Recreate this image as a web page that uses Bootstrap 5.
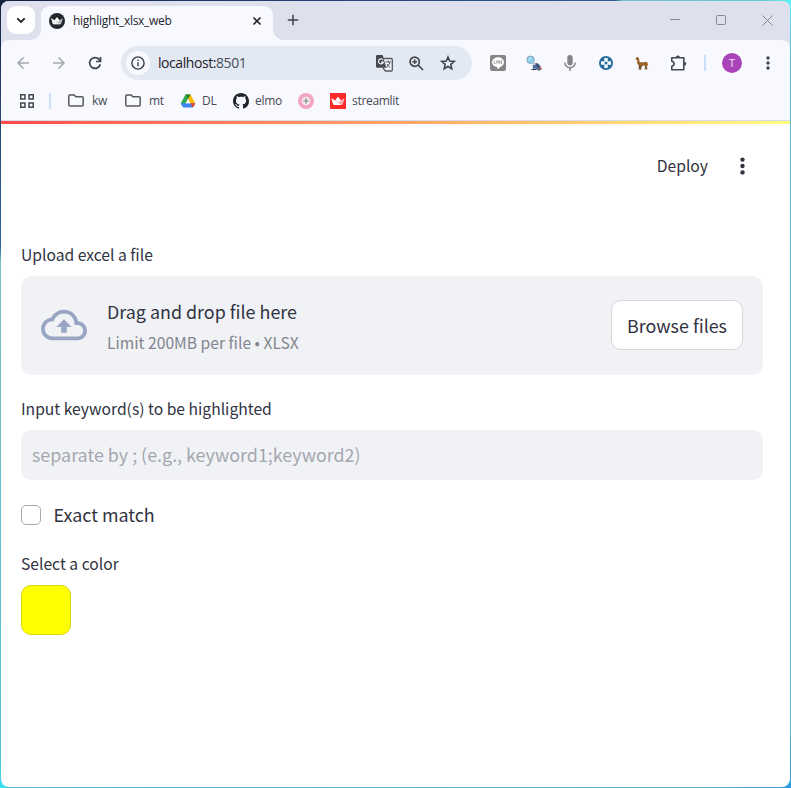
<!DOCTYPE html>
<html lang="en">
<head>
<meta charset="utf-8">
<meta name="viewport" content="width=device-width, initial-scale=1">
<title>highlight_xlsx_web</title>
<link href="https://cdn.jsdelivr.net/npm/bootstrap@5.3.0/dist/css/bootstrap.min.css" rel="stylesheet">
<style>
  html, body { height: 100%; }
  body {
    overflow: hidden; padding: 1px; color: #31333f;
    font-family: "Noto Sans CJK JP", "Noto Sans CJK SC", "Open Sans", sans-serif;
    background:
      linear-gradient(90deg, #14213f 0, #25406e 300px, #2f5c98 615px, #6cc3c9 622px, #66c9cf 760px, #5ff1f7 791px) top left / 100% 6px no-repeat,
      linear-gradient(#14213f 0, #2a4a78 120px, #2d6298 245px, #74c4c9 262px, #62c2cd 600px, #4fc3d3 760px, #3fe0f5 788px) top left / 6px 100% no-repeat,
      linear-gradient(#5ff1f7 0, #55bccb 60px, #4fb8cc 740px, #2a9be0 788px) top right / 6px 100% no-repeat,
      linear-gradient(90deg, #45bfd2, #4fb4c4 700px, #2f9fe0) bottom left / 100% 6px no-repeat;
  }
  svg { display: block; flex: none; }
  .chrome { font-family: "Open Sans", "Noto Sans", sans-serif; }
  .app-window { border-radius: 8px; overflow: hidden; background: #fff; }
  .tab-strip { height: 39px; background: #dee1ed; padding: 5px 0 0 6px; }
  .tab-search { width: 28px; height: 28px; border-radius: 9px; background: #fff; margin-right: 6px; }
  .page-tab { width: 232px; height: 34px; border-radius: 9px 9px 0 0; background: #f8f9fe; padding: 0 11px 5px 8px; }
  .page-tab::before, .page-tab::after { content: ""; position: absolute; bottom: 0; width: 10px; height: 10px; }
  .page-tab::before { left: -10px; background: radial-gradient(circle at 0 0, transparent 9.5px, #f8f9fe 10px); }
  .page-tab::after { right: -10px; background: radial-gradient(circle at 100% 0, transparent 9.5px, #f8f9fe 10px); }
  .tab-title { font-size: 12px; letter-spacing: -.28px; color: #22252b; margin-left: 8px; }
  .new-tab { width: 40px; height: 28px; }
  .win-controls { height: 28px; }
  .win-controls > span { width: 46px; }
  .tool-wrap { background: #dee1ed; }
  .tool-bar { height: 46px; background: #f8f9fe; border-radius: 8px 8px 0 0; padding-left: 4px; }
  .slot { width: 36px; }
  .slot-sm { width: 32px; }
  .slot-div { width: 18px; }
  .omnibox { width: 351px; height: 34px; border-radius: 17px; background: #e3e9f3; margin-left: 8px; margin-right: 8px; padding: 0 8px 0 5px; }
  .site-info { width: 24px; height: 24px; border-radius: 50%; background: #f8f9fe; }
  .address { font-size: 14px; letter-spacing: -.43px; color: #1f2227; margin-left: 8px; padding-bottom: 1px; }
  .address span { color: #4a4e56; }
  .v-bar { width: 2px; height: 16px; background: #cde0fa; }
  .avatar { width: 20px; height: 20px; border-radius: 50%; background: #a944b8; color: #f3dff6; font-size: 11.5px; line-height: 1; }
  .bookmark-bar { height: 34px; background: #f8f9fe; padding: 0 0 5px 19px; font-size: 12px; letter-spacing: -.3px; color: #464a52; }
  .bookmark-bar .v-bar { margin: 0 17px 0 15px; }
  .bookmark-bar .bm { gap: 8px; }
  .bm-a { width: 57px; } .bm-b { width: 55px; } .bm-c { width: 53px; } .bm-d { width: 65px; } .bm-e { width: 32px; }
  .bookmark-bar .bm-c, .bookmark-bar .bm-d, .bookmark-bar .bm-f { gap: 6px; }
  .hair { height: 1px; background: #d8dbe6; }
  .decor { height: 3px; background: linear-gradient(90deg, #ff4b4b, #fffd80); }
  .app-head { height: 84px; padding-right: 38px; }
  .deploy { font-size: 15.7px; line-height: 24px; margin-right: 25px; padding-bottom: 1px; }
  .app-main { padding: 35px 27px 0 20px; }
  .field-label { font-size: 15.67px; line-height: 24px; margin-bottom: 9px; display: block; }
  .dropzone { height: 99px; background: #f0f2f6; border-radius: 10px; padding: 0 20px 1px; margin-bottom: 22px; }
  .dz-text { margin-left: 20px; padding-top: 1px; }
  .dz-title { font-size: 17.9px; line-height: 30px; }
  .dz-note { font-size: 15.67px; line-height: 25px; color: #83858e; margin-top: 4px; }
  .browse { width: 132px; height: 50px; border: 1px solid #d6d6d9; border-radius: 10px; background: #fff; color: #31333f; font-size: 17.9px; padding: 0; }
  .keyword { height: 50px; background: #f0f2f6 !important; border: 0; border-radius: 10px; font-size: 17.9px; padding: 0 11px 2px; margin-bottom: 20px; }
  .keyword::placeholder { color: #a5a7ae; opacity: 1; }
  .check-row { height: 30px; margin-bottom: 22px; font-size: 17.9px; padding: 0; }
  .check-row .form-check-input { width: 20px; height: 20px; margin: 0 12.500px 0 0; border: 1px solid #a9aaaf; border-radius: 5px; float: none; }
  .check-row label { padding-bottom: 2px; }
  .swatch { width: 50px; height: 50px; border-radius: 10px; background: #ff0; border: 1px solid #d6d608; }
</style>
<script src="https://cdn.jsdelivr.net/npm/bootstrap@5.3.0/dist/js/bootstrap.bundle.min.js"></script>
</head>
<body>
<div class="app-window h-100 d-flex flex-column">
  <header class="chrome">
    <div class="tab-strip d-flex align-items-start">
      <div class="tab-search d-flex align-items-center justify-content-center">
        <svg width="10" height="7" fill="none" stroke="#222" stroke-width="1.8"><path d="M1.3 1.3 5 5l3.700-3.700"/></svg>
      </div>
      <div class="page-tab position-relative d-flex align-items-center">
        <svg width="16" height="16"><circle cx="8" cy="8" r="8" fill="#23262e"/><path d="m2.200 5.200 3.300 2L8 4.300l2.500 2.900 3.300-2-1.400 5.100q-.3.900-1.200.9H4.800q-.9 0-1.200-.9z" fill="#b9babd"/><path d="m5.500 7.200 2.500-2.900 2.500 2.900L9.300 9z" fill="#fff"/><path d="m2.200 5.200 9 6H4.800q-.9 0-1.200-.9z" fill="#f2f2f2"/></svg>
        <span class="tab-title">highlight_xlsx_web</span>
        <svg class="ms-auto" width="10" height="10" stroke="#222" stroke-width="1.600"><path d="m1.500 1.500 7 7m0-7-7 7"/></svg>
      </div>
      <div class="new-tab d-flex align-items-center justify-content-center">
        <svg width="12" height="12" stroke="#3d4047" stroke-width="1.500"><path d="M6 .8v10.400M.8 6h10.400"/></svg>
      </div>
      <div class="win-controls ms-auto d-flex align-items-center">
        <span class="d-flex justify-content-center"><svg width="10" height="10" stroke="#858993"><path d="M0 4.500h10"/></svg></span>
        <span class="d-flex justify-content-center"><svg width="10" height="10" fill="none" stroke="#858993"><rect x=".5" y=".5" width="9" height="9" rx="1"/></svg></span>
        <span class="d-flex justify-content-center"><svg width="11" height="11" stroke="#858993"><path d="m.5.500 10 10m0-10-10 10"/></svg></span>
      </div>
    </div>
    <div class="tool-wrap">
      <div class="tool-bar d-flex align-items-center">
        <span class="slot d-flex justify-content-center"><svg width="14" height="14" fill="none" stroke="#a5a8ae" stroke-width="1.500"><path d="M13 7H2m5.500-5.500L2 7l5.500 5.500"/></svg></span>
        <span class="slot d-flex justify-content-center"><svg width="14" height="14" fill="none" stroke="#a5a8ae" stroke-width="1.500"><path d="M1 7h11M6.500 1.500 12 7l-5.500 5.500"/></svg></span>
        <span class="slot d-flex justify-content-center"><svg width="14" height="14" fill="none" stroke="#3d4350" stroke-width="1.700"><path d="M12.300 8.300A5.400 5.400 0 1 1 11 3.300L12.500 5"/><path d="M12.500 1v4.500H8"/></svg></span>
        <div class="omnibox d-flex align-items-center">
          <span class="site-info d-flex align-items-center justify-content-center"><svg width="14" height="14" fill="none" stroke="#3a3d44" stroke-width="1.400"><circle cx="7" cy="7" r="6.100"/><path d="M7 6.300v4M7 3.500V5"/></svg></span>
          <span class="address">localhost:<span>8501</span></span>
          <span class="slot-sm ms-auto d-flex justify-content-center"><svg width="17" height="18"><path d="M7 4.500h8.300q1 0 1 1V16q0 1-1 1H9.500L7 14" fill="#f0f3f8" stroke="#55585f" stroke-width="1.300"/><path d="M9.500 8h5.500M12.200 6.500V8m1.900 0q-.8 3.500-4 5.500m.8-3.500q1.400 2.300 3.200 3.500" fill="none" stroke="#55585f"/><path d="M1.200 1h5.500l3.500 12.800h-9q-1.200 0-1.200-1.200V2.200Q0 1 1.200 1z" fill="#45484f"/><path d="M7 6A2.500 2.500 0 1 0 7.300 8.200H5" fill="none" stroke="#f4f5f8" stroke-width="1.200"/></svg></span>
          <span class="slot-sm d-flex justify-content-center"><svg width="15" height="15" fill="none" stroke="#44474e" stroke-width="1.700"><circle cx="5.700" cy="5.700" r="4.600"/><path d="m9 9 5 5"/><path d="M3.300 5.700h4.800M5.700 3.300v4.800" stroke-width="1.400"/></svg></span>
          <span class="slot-sm d-flex justify-content-center"><svg width="16" height="16" fill="none" stroke="#44474e" stroke-width="1.600"><path d="m8 2 1.700 4.100 4.500.4-3.400 2.900 1 4.400L8 11.500l-3.800 2.300 1-4.400-3.400-2.900 4.500-.4z"/></svg></span>
        </div>
        <span class="slot d-flex justify-content-center"><svg width="16" height="16"><rect width="16" height="16" rx="2" fill="#858585"/><ellipse cx="8" cy="7.200" rx="6" ry="4.900" fill="#fff"/><path d="M6.500 11.500 8 14.300l4-3.800z" fill="#fff"/><path d="M4.200 5.500v3h1.500M6.700 5.500v3M8 8.500v-3l1.700 3v-3M12.200 5.800H11v2.500h1.200M11 7h1" stroke="#858585" stroke-width=".7" fill="none"/></svg></span>
        <span class="slot d-flex justify-content-center"><svg width="16" height="16"><path d="M7 12.500q-1-2 1.500-4l3-.5 3 3 .5 4-2-.5-2 .5-1-1.500-3 .5z" fill="#526d99"/><path d="m10 9 2.500.5 1 2-2 1z" fill="#30476f"/><path d="M5.500 14.500h5M12 15h2" stroke="#283350" stroke-width="1.200"/><path d="m13.500 13 2 1" stroke="#b64a32" stroke-width="1.800"/><circle cx="4.600" cy="4.800" r="3.800" fill="#8ad1ef" stroke="#8ca4b5"/><path d="M3 5q.3-2 2-2.300" stroke="#d8f4ff" fill="none"/><path d="m7.300 7.700 2 2" stroke="#b7bdc6" stroke-width="1.500"/></svg></span>
        <span class="slot d-flex justify-content-center"><svg width="12" height="16"><rect x="3.300" width="5.400" height="10.500" rx="2.700" fill="#858585"/><path d="M.8 7.500a5.200 5.200 0 0 0 10.400 0M6 12.700V16" fill="none" stroke="#858585" stroke-width="1.500"/></svg></span>
        <span class="slot d-flex justify-content-center"><svg width="14" height="14"><circle cx="7" cy="7" r="7" fill="#246d9c"/><path d="M5.300 2h3.400v3.300H12v3.400H8.700V12H5.300V8.700H2V5.300h3.300z" fill="#f6fafc"/><rect x="5.700" y="5.700" width="2.600" height="2.600" fill="#246d9c"/></svg></span>
        <span class="slot d-flex justify-content-center"><svg width="14" height="13"><path d="M1 1 2.500 0l1 .5.7 1.500.3 3q3 .8 6-.2l2 .8.8 4-1-1.500-.3 1.500.5 3h-1.300l-.7-3-1-1-3 .3-.5 3.700H4.500L4 9 2.300 6.500 2.200 3 .5 2.500z" fill="#9a6328"/><path d="m4.500 8.500-.5 4m3-3.500-1.500 1.500.5 2M11 9l-1 3.500" stroke="#52402f" fill="none"/><path d="M1.500 1.500h1M3 4.500v1" stroke="#5c3e20"/></svg></span>
        <span class="slot d-flex justify-content-center"><svg width="17" height="17" fill="none" stroke="#424a59" stroke-width="1.600"><path d="M1.800 2.800h12v11.900h-12v-3.500q2.300-.6 2.300-2.500T1.800 6.200z" stroke-linejoin="round"/><path d="M6 2q1.800-2.400 3.600 0zM14.800 7q2.200 1.700 0 3.400z" fill="#424a59" stroke-width="1"/></svg></span>
        <span class="slot-div d-flex justify-content-center"><span class="v-bar"></span></span>
        <span class="slot d-flex justify-content-center"><span class="avatar d-flex align-items-center justify-content-center">T</span></span>
        <span class="slot d-flex justify-content-center"><svg width="4" height="14" fill="#3f4654"><circle cx="2" cy="2" r="1.700"/><circle cx="2" cy="7" r="1.700"/><circle cx="2" cy="12" r="1.700"/></svg></span>
      </div>
    </div>
    <nav class="bookmark-bar d-flex align-items-center">
      <svg width="14" height="14" fill="none" stroke="#44474e" stroke-width="1.500"><path d="M.75.750h4.200v4.200H.75zM9.050.750h4.200v4.200h-4.200zM.75 9.050h4.200v4.200H.75zM9.050 9.050h4.200v4.200h-4.200z"/></svg>
      <span class="v-bar"></span>
      <span class="bm bm-a d-flex align-items-center"><svg width="16" height="13" fill="none" stroke="#55585e" stroke-width="1.500"><path d="M1.800.9h4.400l1.700 1.800h6.300q1 0 1 1v7.200q0 1-1 1H1.800q-1 0-1-1v-9q0-1 1-1z"/></svg>kw</span>
      <span class="bm bm-b d-flex align-items-center"><svg width="16" height="13" fill="none" stroke="#55585e" stroke-width="1.500"><path d="M1.800.9h4.400l1.700 1.800h6.300q1 0 1 1v7.200q0 1-1 1H1.800q-1 0-1-1v-9q0-1 1-1z"/></svg>mt</span>
      <span class="bm bm-c d-flex align-items-center"><svg width="16" height="14"><path d="M5.500.5h5L8 5 3.500 13.500Q2.500 13 .8 9.300z" fill="#2da94f"/><path d="M5.500.5h5l4.800 8.800h-5z" fill="#ffba00"/><path d="M5.500.5h5L8 5z" fill="#188038"/><path d="M.8 9.300h14.500q-1.300 3-2.800 4.300h-9Q1.800 12.300.8 9.300z" fill="#4285f4"/><path d="M10.300 9.300h5q-1.300 3-2.500 4.200z" fill="#ea4335"/><path d="m8 5 2.300 4.300H5.700z" fill="#fff"/></svg>DL</span>
      <span class="bm bm-d d-flex align-items-center"><svg width="16" height="16" viewBox="0 0 16 16" fill="#20242b"><path d="M8 0C3.580 0 0 3.580 0 8c0 3.540 2.290 6.530 5.470 7.590.4.070.55-.17.55-.38 0-.19-.01-.82-.01-1.490-2.010.37-2.530-.49-2.690-.94-.09-.23-.48-.94-.82-1.130-.28-.15-.68-.52-.01-.53.63-.01 1.080.58 1.230.82.720 1.210 1.870.87 2.330.66.070-.52.280-.87.510-1.070-1.780-.2-3.640-.89-3.640-3.950 0-.87.310-1.590.82-2.150-.08-.2-.36-1.020.080-2.120 0 0 .67-.21 2.200.82.640-.18 1.320-.27 2-.27s1.360.09 2 .27c1.530-1.040 2.200-.82 2.200-.82.440 1.100.16 1.920.08 2.120.51.560.82 1.270.82 2.150 0 3.070-1.870 3.750-3.650 3.950.29.250.54.730.54 1.480 0 1.070-.01 1.930-.01 2.200 0 .21.150.46.55.38A8.010 8.010 0 0 0 16 8c0-4.420-3.580-8-8-8z"/></svg>elmo</span>
      <span class="bm bm-e d-flex align-items-center"><svg width="16" height="16"><circle cx="8" cy="8" r="8" fill="#f2a5c0"/><circle cx="8" cy="8" r="4.300" fill="#f3e9ed"/><path d="M8 5.300v5.400M5.300 8h5.400" stroke="#85868e" stroke-width="1.200"/></svg></span>
      <span class="bm bm-f d-flex align-items-center"><svg width="16" height="16"><path fill="#ff2b2b" d="M0 0h16v16H0z"/><path d="m1.300 5.300 4 2L8 3.800l2.700 3.500 4-2-2 5.900q-.3.800-1.200.8h-7q-.9 0-1.200-.8z" fill="#ffabab"/><path d="m1.300 5.300 10.200 6.700h-7q-.9 0-1.200-.8z" fill="#fff"/><path d="m5.300 7.300 2.700-3.500 2.700 3.500L9 9.500z" fill="#fff"/></svg>streamlit</span>
    </nav>
    <div class="hair"></div>
  </header>
  <div class="decor"></div>
  <div class="app-head d-flex align-items-center justify-content-end flex-shrink-0">
    <span class="deploy">Deploy</span>
    <svg width="19" height="18" fill="#31333f"><circle cx="9.500" cy="2.600" r="2.200"/><circle cx="9.500" cy="9" r="2.200"/><circle cx="9.500" cy="15.400" r="2.200"/></svg>
  </div>
  <main class="app-main flex-grow-1">
    <label class="field-label">Upload excel a file</label>
    <section class="dropzone d-flex align-items-center">
      <svg width="46" height="46" viewBox="0 0 24 24" fill="#98a6c4"><path d="M19.350 10.040A7.490 7.490 0 0 0 12 4C9.110 4 6.600 5.640 5.350 8.040A5.994 5.994 0 0 0 0 14c0 3.310 2.690 6 6 6h13c2.760 0 5-2.240 5-5 0-2.640-2.050-4.780-4.650-4.960zM19 18H6c-2.210 0-4-1.790-4-4s1.790-4 4-4h.71C7.370 7.690 9.480 6 12 6c3.040 0 5.500 2.460 5.500 5.500v.5H19c1.660 0 3 1.340 3 3s-1.340 3-3 3z"/><path d="M8 13h2.550v3h2.900v-3H16l-4-4z"/></svg>
      <div class="dz-text">
        <div class="dz-title">Drag and drop file here</div>
        <div class="dz-note">Limit 200MB per file • XLSX</div>
      </div>
      <button class="btn browse ms-auto" type="button">Browse files</button>
    </section>
    <label class="field-label" for="kw">Input keyword(s) to be highlighted</label>
    <input id="kw" class="form-control keyword" type="text" placeholder="separate by ; (e.g., keyword1;keyword2)">
    <div class="check-row form-check d-flex align-items-center">
      <input class="form-check-input" type="checkbox" id="exact">
      <label for="exact">Exact match</label>
    </div>
    <label class="field-label">Select a color</label>
    <div class="swatch"></div>
  </main>
</div>
</body>
</html>
